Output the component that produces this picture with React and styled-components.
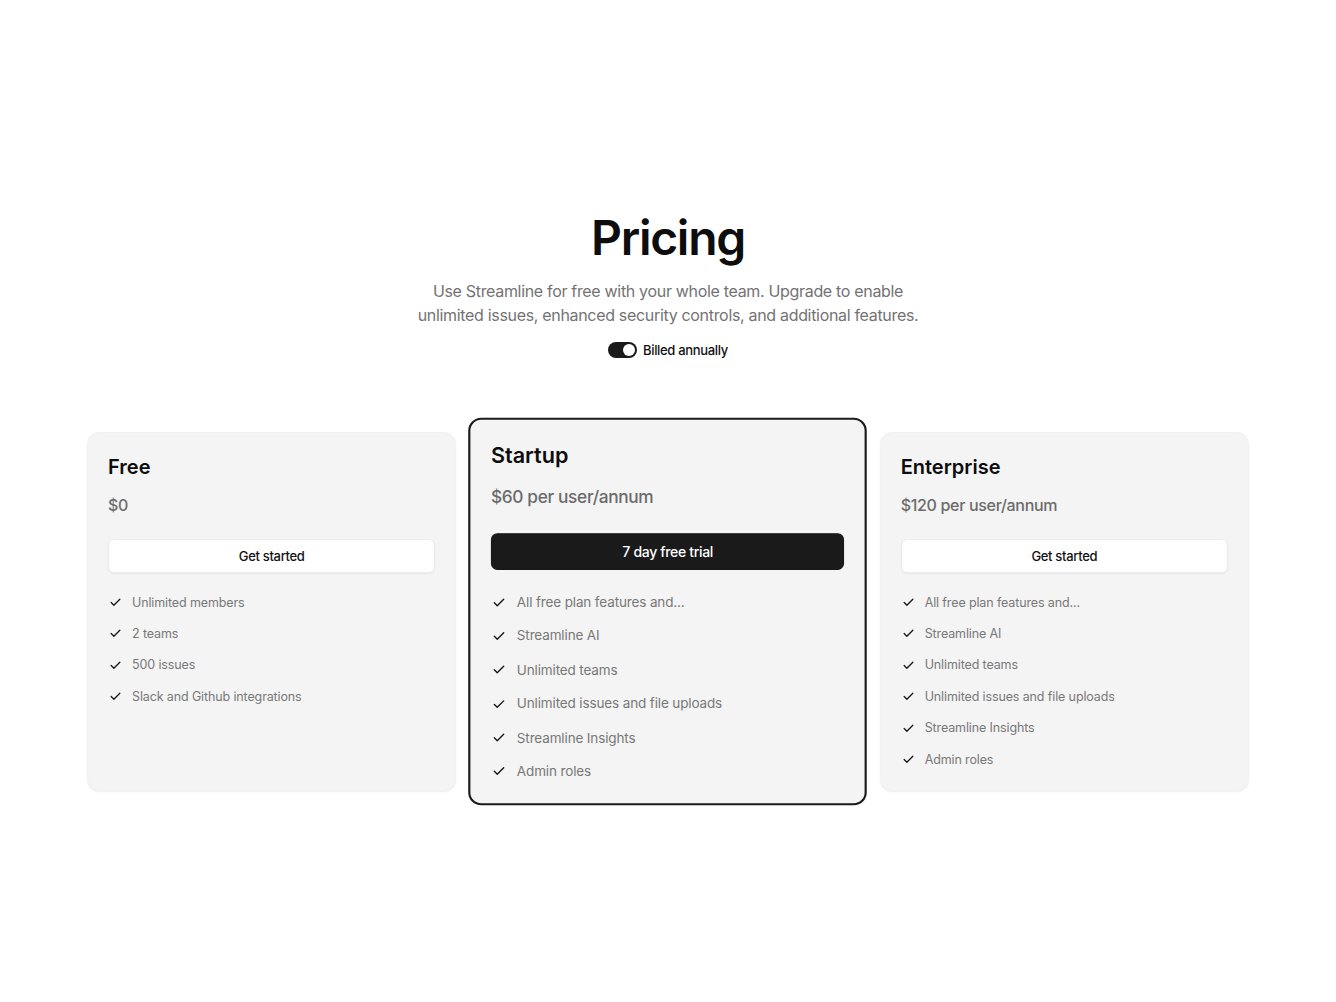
import React from "react";
import styled, { createGlobalStyle } from "styled-components";
import { Check } from "lucide-react";

const Global = createGlobalStyle`
  html, body { margin: 0; padding: 0; background: #ffffff; }
  body { font-family: Inter, "Noto Sans", "Liberation Sans", sans-serif; color: #111; letter-spacing: -0.02em; -webkit-font-smoothing: antialiased; }
  * { box-sizing: border-box; }
`;

const Page = styled.main`
  width: 1162px;
  margin: 0 auto;
  padding: 209px 0 160px;
  display: flex;
  flex-direction: column;
  align-items: center;
`;

const Title = styled.h1`
  margin: 0;
  font-size: 48px;
  line-height: 57.6px;
  font-weight: 600;
  letter-spacing: -1.3px;
  color: #0d0d0d;
`;

const Subtitle = styled.p`
  margin: 12px 0 0;
  text-align: center;
  font-size: 16px;
  line-height: 24px;
  color: #737373;
`;

const ToggleRow = styled.label`
  margin-top: 13px;
  display: flex;
  align-items: center;
  gap: 6px;
  font-size: 13px;
  line-height: 20px;
  font-weight: 500;
  color: #111;
`;

const Switch = styled.span`
  width: 29px;
  height: 16px;
  border-radius: 999px;
  background: #1a1a1a;
  display: flex;
  align-items: center;
  justify-content: flex-end;
  padding: 2px;
`;

const Knob = styled.span`
  width: 12px;
  height: 12px;
  border-radius: 50%;
  background: #fff;
`;

const Grid = styled.section`
  margin-top: 72px;
  width: 100%;
  display: grid;
  grid-template-columns: repeat(3, 1fr);
  gap: 27px;
  align-items: stretch;
`;

const Card = styled.article`
  background: #f4f4f4;
  border-radius: 12px;
  padding: ${(p) => (p.$featured ? "19px" : "20px")};
  border: ${(p) => (p.$featured ? "2px solid #1a1a1a" : "1px solid #f1f1f1")};
  box-shadow: ${(p) => (p.$featured ? "none" : "0 1px 2px rgba(0,0,0,0.07)")};
  transform: ${(p) => (p.$featured ? "scale(1.08)" : "none")};
  display: flex;
  flex-direction: column;
`;

const PlanName = styled.h2`
  margin: 0;
  font-size: 20px;
  line-height: 28px;
  font-weight: 600;
  letter-spacing: 0;
  color: #0d0d0d;
`;

const Price = styled.div`
  margin-top: 12px;
  font-size: 16px;
  line-height: 24px;
  color: #6b6b6b;
  font-weight: 500;
`;

const Button = styled.button`
  margin-top: 22px;
  height: 34px;
  width: 100%;
  border-radius: 6px;
  font-family: inherit;
  letter-spacing: inherit;
  font-size: 13px;
  font-weight: 500;
  cursor: pointer;
  border: ${(p) => (p.$primary ? "1px solid #1a1a1a" : "1px solid #ececec")};
  background: ${(p) => (p.$primary ? "#1a1a1a" : "#ffffff")};
  color: ${(p) => (p.$primary ? "#ffffff" : "#111111")};
  box-shadow: ${(p) => (p.$primary ? "none" : "0 1px 2px rgba(0,0,0,0.05)")};
`;

const Features = styled.ul`
  list-style: none;
  margin: 20px 0 0;
  padding: 0;
  display: flex;
  flex-direction: column;
  gap: 11.4px;
`;

const Feature = styled.li`
  display: flex;
  align-items: center;
  gap: 10px;
  font-size: 12.5px;
  line-height: 20px;
  letter-spacing: -0.01em;
  color: #787878;
  padding-left: 1px;
`;

const CheckIcon = styled(Check)`
  flex: none;
  color: #161616;
`;

const plans = [
  {
    name: "Free",
    price: "$0",
    cta: "Get started",
    features: ["Unlimited members", "2 teams", "500 issues", "Slack and Github integrations"],
  },
  {
    name: "Startup",
    price: "$60 per user/annum",
    cta: "7 day free trial",
    featured: true,
    features: [
      "All free plan features and...",
      "Streamline AI",
      "Unlimited teams",
      "Unlimited issues and file uploads",
      "Streamline Insights",
      "Admin roles",
    ],
  },
  {
    name: "Enterprise",
    price: "$120 per user/annum",
    cta: "Get started",
    features: [
      "All free plan features and...",
      "Streamline AI",
      "Unlimited teams",
      "Unlimited issues and file uploads",
      "Streamline Insights",
      "Admin roles",
    ],
  },
];

export default function App() {
  return (
    <>
      <Global />
      <Page>
        <Title>Pricing</Title>
        <Subtitle>
          Use Streamline for free with your whole team. Upgrade to enable
          <br />
          unlimited issues, enhanced security controls, and additional features.
        </Subtitle>
        <ToggleRow>
          <Switch>
            <Knob />
          </Switch>
          Billed annually
        </ToggleRow>
        <Grid>
          {plans.map((plan) => (
            <Card key={plan.name} $featured={plan.featured}>
              <PlanName>{plan.name}</PlanName>
              <Price>{plan.price}</Price>
              <Button $primary={plan.featured}>{plan.cta}</Button>
              <Features>
                {plan.features.map((f) => (
                  <Feature key={f}>
                    <CheckIcon size={13} strokeWidth={2.4} />
                    {f}
                  </Feature>
                ))}
              </Features>
            </Card>
          ))}
        </Grid>
      </Page>
    </>
  );
}
